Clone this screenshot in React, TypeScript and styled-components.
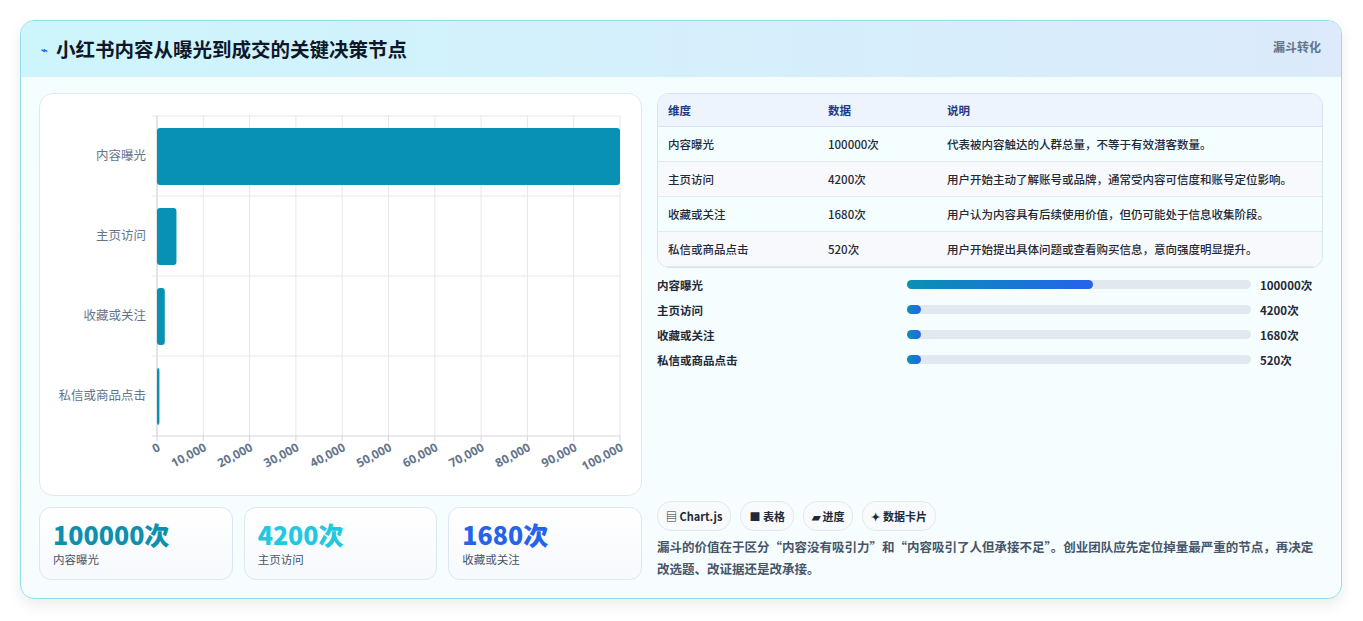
import React from "react";
import styled, { createGlobalStyle } from "styled-components";

const G = createGlobalStyle`
  body { margin:0; background:#f3f4f6; font-family:"Noto Sans CJK SC","Noto Sans",sans-serif; }
`;
const Page = styled.div`width:1363px;height:621px;padding:20px 21px 22px 20px;box-sizing:border-box;background:#fff;`;
const Card = styled.div`
  height:579px;border:1px solid #8fe0ea;border-radius:14px;overflow:hidden;box-sizing:border-box;
  background:linear-gradient(180deg,#f4feff,#f7fdff);box-shadow:0 6px 14px rgba(0,0,0,0.08);
  display:flex;flex-direction:column;`;
const Header = styled.div`
  height:55px;flex:none;display:flex;align-items:center;justify-content:space-between;padding:0 20px 0 20px;
  background:linear-gradient(90deg,#cdf5fc,#dceafb);border-bottom:1px solid #d5f1f7;`;
const Title = styled.h1`margin:0;font-size:19.5px;font-weight:700;color:#0f172a;display:flex;align-items:center;gap:8px;`;
const Tag = styled.span`font-size:12px;font-weight:700;color:#64748b;align-self:flex-start;margin-top:17px;`;
const Body = styled.div`flex:1;display:grid;grid-template-columns:603px 1fr;gap:15px;padding:16px 18px 18px 18px;`;
const Col = styled.div`display:flex;flex-direction:column;gap:11px;`;
const ChartBox = styled.div`height:403px;background:#fff;border:1px solid #e2e8f0;border-radius:14px;box-sizing:border-box;`;
const Stats = styled.div`display:grid;grid-template-columns:repeat(3,1fr);gap:11px;`;
const Stat = styled.div`height:73px;border:1px solid #dbe7f3;border-radius:12px;background:linear-gradient(180deg,#fff,#f6f9fd);padding:10px 13px;box-sizing:border-box;`;
const Big = styled.div<{c:string}>`font-size:25px;font-weight:800;color:${p=>p.c};line-height:32px;font-family:"Noto Sans CJK SC",sans-serif;`;
const Small = styled.div`font-size:11.5px;color:#475569;margin-top:1px;`;
const Table = styled.table`width:100%;border-collapse:separate;border-spacing:0;border:1px solid #d8e2ee;border-radius:12px;overflow:hidden;font-size:11.5px;`;
const Th = styled.th`text-align:left;font-weight:700;color:#1e3a8a;background:#eef4fd;height:32px;padding:0 10px;border-bottom:1px solid #d8e2ee;`;
const Td = styled.td<{alt?:boolean}>`height:34px;padding:0 10px;color:#1f2937;font-weight:500;background:${p=>p.alt?"#f7f9fc":"#f4feff"};border-bottom:1px solid #e2e8f0;`;
const Bars = styled.div`display:flex;flex-direction:column;gap:8px;margin-top:8px;`;
const BarRow = styled.div`display:grid;grid-template-columns:241px 344px 1fr;gap:9px;align-items:center;font-size:11.5px;font-weight:700;color:#1f2937;height:17px;`;
const Track = styled.div`height:9px;border-radius:5px;background:#e2e8f0;`;
const Fill = styled.div`height:9px;border-radius:5px;background:linear-gradient(90deg,#0891b2,#2563eb);min-width:14px;`;
const Spacer = styled.div`flex:1;`;
const Chips = styled.div`display:flex;gap:9px;`;
const Chip = styled.span`height:28px;padding:0 8px;border:1px solid #e2e8f0;border-radius:14px;background:#f8fafc;font-size:11px;font-weight:700;color:#1f2937;display:flex;align-items:center;gap:3px;`;
const Note = styled.p`margin:5px 0 0;font-size:12.5px;font-weight:600;color:#475569;line-height:22px;`;

const data=[["内容曝光",100000,"代表被内容触达的人群总量，不等于有效潜客数量。"],["主页访问",4200,"用户开始主动了解账号或品牌，通常受内容可信度和账号定位影响。"],["收藏或关注",1680,"用户认为内容具有后续使用价值，但仍可能处于信息收集阶段。"],["私信或商品点击",520,"用户开始提出具体问题或查看购买信息，意向强度明显提升。"]] as const;

function Chart(){
  const x0=117,x1=580,y0=22,h=320;
  return <svg width="603" height="403">
    {Array.from({length:11},(_,i)=>{const x=x0+i*(x1-x0)/10;return <g key={i}>
      <line x1={x} x2={x} y1={y0} y2={y0+h} stroke="#e5e7eb"/>
      <line x1={x} x2={x} y1={y0+h} y2={y0+h+5} stroke="#d1d5db"/>
      <text transform={`translate(${x+4},${y0+h+14}) rotate(-28)`} textAnchor="end" fontSize="12" fontWeight="700" fill="#64748b" fontFamily="Noto Sans">{i===0?"0":(i*10000).toLocaleString("en-US")}</text></g>})}
    {[0,1,2,3,4].map(i=><line key={i} x1={x0-5} x2={x1} y1={y0+i*80} y2={y0+i*80} stroke={i===4?"#d1d5db":"#e5e7eb"}/>)}
    <line x1={x0} x2={x0} y1={y0} y2={y0+h} stroke="#d1d5db"/>
    {data.map((d,i)=>{const w=Math.max(2,(d[1] as number)/100000*(x1-x0));const cy=y0+i*80+40;return <g key={i}>
      <rect x={x0} y={cy-28} width={w} height={57} rx={3} fill="#0891b2"/>
      <text x={x0-11} y={cy+4} textAnchor="end" fontSize="12.5" fill="#64748b" fontFamily="Noto Sans CJK SC">{d[0]}</text></g>})}
  </svg>;
}

export default function App(){
  return <Page><G/><Card>
    <Header><Title><span style={{fontSize:11,color:"#2563eb"}}>⌁</span>小红书内容从曝光到成交的关键决策节点</Title><Tag>漏斗转化</Tag></Header>
    <Body>
      <Col>
        <ChartBox><Chart/></ChartBox>
        <Stats>
          <Stat><Big c="#0e8fad">100000次</Big><Small>内容曝光</Small></Stat>
          <Stat><Big c="#22c7e0">4200次</Big><Small>主页访问</Small></Stat>
          <Stat><Big c="#2563eb">1680次</Big><Small>收藏或关注</Small></Stat>
        </Stats>
      </Col>
      <Col style={{gap:0}}>
        <Table><thead><tr><Th style={{width:140}}>维度</Th><Th style={{width:99}}>数据</Th><Th>说明</Th></tr></thead>
          <tbody>{data.map((d,i)=><tr key={i}><Td alt={i%2===1}>{d[0]}</Td><Td alt={i%2===1}>{d[1]}次</Td><Td alt={i%2===1}>{d[2]}</Td></tr>)}</tbody></Table>
        <Bars>{data.map((d,i)=><BarRow key={i}><span>{d[0]}</span><Track><Fill style={{width:`${i===0?54:0}%`}}/></Track><span>{d[1]}次</span></BarRow>)}</Bars>
        <Spacer/>
        <Chips><Chip>▤ Chart.js</Chip><Chip>■ 表格</Chip><Chip>▰ 进度</Chip><Chip>✦ 数据卡片</Chip></Chips>
        <Note>漏斗的价值在于区分“内容没有吸引力”和“内容吸引了人但承接不足”。创业团队应先定位掉量最严重的节点，再决定改选题、改证据还是改承接。</Note>
      </Col>
    </Body>
  </Card></Page>;
}
